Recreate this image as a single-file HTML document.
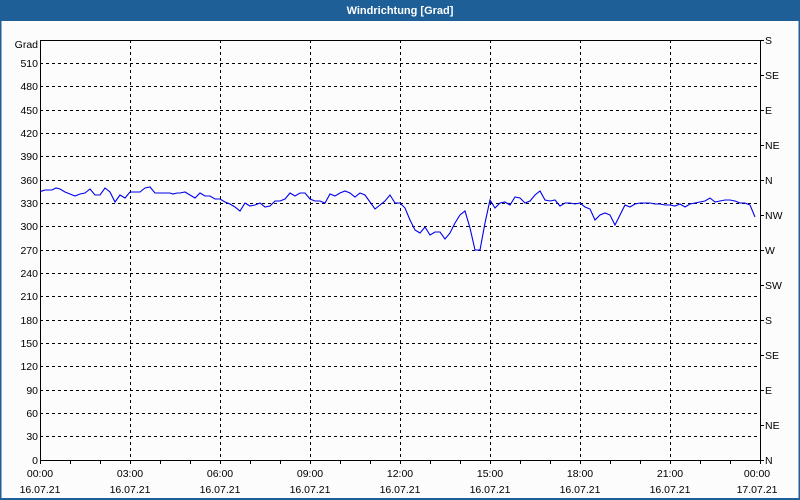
<!DOCTYPE html>
<html><head><style>
html,body{margin:0;padding:0;width:800px;height:500px;overflow:hidden;background:#fff}
svg text{font-family:"Liberation Sans",sans-serif;font-size:10.5px;fill:#000}
</style></head><body>
<svg width="800" height="500" xmlns="http://www.w3.org/2000/svg">
<rect x="0" y="0" width="800" height="500" fill="#fcfcfc"/>
<rect x="0" y="0" width="800" height="21" fill="#1e5f98"/>
<rect x="0" y="0" width="1.5" height="500" fill="#1e5f98"/>
<rect x="798.5" y="0" width="1.5" height="500" fill="#1e5f98"/>
<rect x="0" y="498" width="800" height="2" fill="#1e5f98"/>
<text x="400" y="14" text-anchor="middle" style="fill:#fff;font-weight:bold;font-size:11px">Windrichtung [Grad]</text>
<g stroke="#000" stroke-width="1" stroke-dasharray="3,3" fill="none">
<path d="M40 63.5H760M40 86.5H760M40 110.5H760M40 133.5H760M40 156.5H760M40 180.5H760M40 203.5H760M40 226.5H760M40 250.5H760M40 273.5H760M40 296.5H760M40 320.5H760M40 343.5H760M40 366.5H760M40 390.5H760M40 413.5H760M40 436.5H760"/>
<path d="M130.5 40V460M220.5 40V460M310.5 40V460M400.5 40V460M490.5 40V460M580.5 40V460M670.5 40V460"/>
</g>
<g stroke="#000" stroke-width="1" fill="none">
<path d="M40.5 40V460.5H760.5V40M40 40.5H760"/>
<path d="M70.5 460v4M100.5 460v4M130.5 460v4M160.5 460v4M190.5 460v4M220.5 460v4M250.5 460v4M280.5 460v4M310.5 460v4M340.5 460v4M370.5 460v4M400.5 460v4M430.5 460v4M460.5 460v4M490.5 460v4M520.5 460v4M550.5 460v4M580.5 460v4M610.5 460v4M640.5 460v4M670.5 460v4M700.5 460v4M730.5 460v4M40.5 460v4M760.5 460v4"/>
<path d="M760 40.5h4M760 75.5h4M760 110.5h4M760 145.5h4M760 180.5h4M760 215.5h4M760 250.5h4M760 285.5h4M760 320.5h4M760 355.5h4M760 390.5h4M760 425.5h4M760 460.5h4"/>
</g>
<g text-anchor="end">
<text x="38" y="48">Grad</text>
<text x="38" y="67">510</text><text x="38" y="90">480</text><text x="38" y="114">450</text><text x="38" y="137">420</text><text x="38" y="160">390</text><text x="38" y="184">360</text><text x="38" y="207">330</text><text x="38" y="230">300</text><text x="38" y="254">270</text><text x="38" y="277">240</text><text x="38" y="300">210</text><text x="38" y="324">180</text><text x="38" y="347">150</text><text x="38" y="370">120</text><text x="38" y="394">90</text><text x="38" y="417">60</text><text x="38" y="440">30</text><text x="38" y="464">0</text>
</g>
<g>
<text x="765" y="44">S</text><text x="765" y="79">SE</text><text x="765" y="114">E</text><text x="765" y="149">NE</text><text x="765" y="184">N</text><text x="765" y="219">NW</text><text x="765" y="254">W</text><text x="765" y="289">SW</text><text x="765" y="324">S</text><text x="765" y="359">SE</text><text x="765" y="394">E</text><text x="765" y="429">NE</text><text x="765" y="464">N</text>
</g>
<g text-anchor="middle">
<text x="40" y="477">00:00</text><text x="40" y="493">16.07.21</text>
<text x="130" y="477">03:00</text><text x="130" y="493">16.07.21</text>
<text x="220" y="477">06:00</text><text x="220" y="493">16.07.21</text>
<text x="310" y="477">09:00</text><text x="310" y="493">16.07.21</text>
<text x="400" y="477">12:00</text><text x="400" y="493">16.07.21</text>
<text x="490" y="477">15:00</text><text x="490" y="493">16.07.21</text>
<text x="580" y="477">18:00</text><text x="580" y="493">16.07.21</text>
<text x="670" y="477">21:00</text><text x="670" y="493">16.07.21</text>
<text x="757" y="477">00:00</text><text x="757" y="493">17.07.21</text>
</g>
<polyline fill="none" stroke="#0000ee" stroke-width="1.1" points="40,191.7 45,190 52,190 56,188 60,189 65,192 70,194 75,196 80,194 85,193 90,189 95,195 100,195 105,188 110,192 115,202 120,195 125,198 130,192 135,192 140,192 145,188 150,187 155,193 170,193 173,194 177,193 180,193 185,192 190,195 195,198 200,193 205,196 210,196 215,199 220,199 225,202 230,204 235,207 240,211 245,203 250,206 255,205 260,203 265,207 270,206 275,201 280,201 285,199 290,193 295,196 300,193 305,193 310,199 315,201 320,201 325,203 330,194 335,196 340,193 345,191 350,193 355,197 360,193 365,195 370,202 375,209 380,205 385,201 390,195 395,203 400,203 405,208 410,220 415,230 420,233 425,227 430,235 435,232 440,232 445,239 450,233 455,223 460,215 465,211 470,228 475,250 480,250 485,223 490,200 495,208 500,203 505,202 510,205 515,197 520,198 525,203 530,201 535,195 540,191 545,200 550,201 555,200 560,206 565,203 570,203 575,204 580,203 585,207 590,209 595,220 600,215 605,213 610,215 615,225 620,215 625,205 630,207 635,204 640,203 650,203 655,204 660,204 665,205 670,205 675,206 680,204 685,207 690,204 695,203 700,202 705,201 710,198 715,202 720,201 725,200 730,200 735,201 740,203 745,203 750,205 755,217"/>
</svg>
</body></html>
